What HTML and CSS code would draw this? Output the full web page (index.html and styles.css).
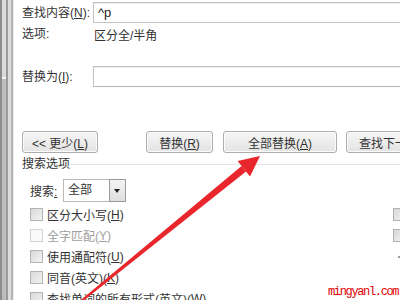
FILE: index.html
```html
<!DOCTYPE html>
<html lang="zh-CN">
<head>
  <meta charset="UTF-8" />
  <meta name="viewport" content="width=device-width, initial-scale=1.0"/>
  <title>查找和替换</title>
  <link rel="stylesheet" href="styles.css">
</head>
<body>

  <div class="screen">
    <!-- barra lateral (scroll) -->
    <div class="scrollbar"></div>

    <div class="dialog">
      <div class="row row-find">
        <span class="label">查找内容(<u>N</u>):</span>
        <div class="input">^p</div>
      </div>
      <div class="row row-opts">
        <span class="label">选项:</span>
        <span class="value">区分全/半角</span>
      </div>
      <div class="row row-replace">
        <span class="label">替换为(<u>I</u>):</span>
        <div class="input"></div>
      </div>

      <!-- botões -->
      <div class="buttons">
        <button class="btn btn-less">&lt;&lt; 更少(<u>L</u>)</button>
        <button class="btn btn-replace">替换(<u>R</u>)</button>
        <button class="btn btn-all">全部替换(<u>A</u>)</button>
        <button class="btn btn-next">查找下一处(<u>F</u>)</button>
      </div>

      <div class="section-title"><span>搜索选项</span><i class="rule"></i></div>

      <div class="search-row">
        <span class="search-label">搜索<u>:</u></span>
        <div class="select"><span>全部</span><i class="drop"></i></div>
      </div>

      <!-- opções de pesquisa -->
      <div class="options">
        <div class="col-left">
          <div class="check"><i class="box"></i>区分大小写(<u>H</u>)</div>
          <div class="check disabled"><i class="box"></i>全字匹配(<u>Y</u>)</div>
          <div class="check"><i class="box"></i>使用通配符(<u>U</u>)</div>
          <div class="check"><i class="box"></i>同音(英文)(<u>K</u>)</div>
          <div class="check"><i class="box"></i>查找单词的所有形式(英文)(<u>W</u>)</div>
        </div>
        <div class="col-right">
          <div class="check"><i class="box"></i></div>
          <div class="check"><i class="box"></i></div>
          <div class="check"><i class="dot"></i></div>
        </div>
      </div>
    </div>
  </div>

  <!-- seta vermelha -->
  <svg class="arrow" viewBox="0 0 400 300" width="400" height="300">
    <polygon points="241.6,166 246,171.4 74.6,307.8 73.4,306.2" fill="#e8262b"/>
    <polygon points="260,156 237.6,160.9 250,176.5" fill="#e8262b"/>
  </svg>

  <div class="watermark">mingyanl.com</div>
</body>
</html>
```

FILE: styles.css
```css
body {
  margin: 0;
  width: 400px;
  height: 300px;
  overflow: hidden;
  position: relative;
  background: #fff;
  font-family: "Liberation Sans", "Noto Sans CJK SC", sans-serif;
  font-size: 12px;
  color: #333;
}
u {
  text-decoration: underline;
  text-underline-offset: 1px;
}
.screen {
  display: flex;
  height: 300px;
}
.scrollbar {
  flex: 0 0 14px;
  background:
    linear-gradient(to bottom, #dadada 0 77px, #f4f4f4 77px 79px, #bdbdbd 79px) 2px 0 / 4px 100% no-repeat,
    linear-gradient(to right, #8c8c8c 0 2px, #cfcfcf 2px 6px, #9a9a9a 6px 8px, #dcdcdc 8px 11px, #b4b4b4 11px 13px, #ececec 13px 14px);
}
.dialog {
  flex: 1;
  min-width: 0;
  padding: 2px 0 0 8px;
}
.row {
  display: flex;
  align-items: center;
  white-space: nowrap;
}
.label {
  flex: 0 0 71px;
  line-height: 14px;
}
.row-find,
.row-replace {
  height: 21px;
}
.row-opts {
  margin-top: 4px;
  height: 14px;
}
.row-opts .value {
  margin-left: 1px;
}
.row-replace {
  margin-top: 25px;
}
.input {
  flex: 0 0 320px;
  height: 19px;
  border: 1px solid #c2c2c2;
  box-shadow: inset 0 1px 0 #f0f0f0;
  padding: 0 4px;
  font-size: 13px;
  line-height: 20px;
  color: #222;
}
.row-replace .input {
  border-bottom-color: #b5b5b5;
}

/* botões */
.buttons {
  display: flex;
  margin-top: 44px;
  height: 22px;
  white-space: nowrap;
}
.btn {
  height: 22px;
  margin: 0;
  padding: 0;
  border: 1px solid #adadad;
  border-radius: 3px;
  background: linear-gradient(#f6f6f6, #e3e3e3);
  box-shadow: inset 0 0 0 1px #fbfbfb;
  font-family: inherit;
  font-size: 12px;
  color: #333;
  flex: 0 0 auto;
}
.btn-less { width: 76px; }
.btn-replace { width: 67px; margin-left: 48px; }
.btn-all { width: 114px; margin-left: 10px; }
.btn-next { width: 110px; margin-left: 9px; text-align: left; padding-left: 12px; }

.section-title {
  display: flex;
  align-items: center;
  margin-top: 4px;
  height: 14px;
  line-height: 14px;
}
.section-title .rule {
  flex: 1;
  height: 1px;
  background: #e4e4e4;
  margin-left: 1px;
}

.search-row {
  display: flex;
  align-items: center;
  margin-top: 8px;
  padding-left: 8px;
  height: 23px;
}
.search-label {
  flex: 0 0 33px;
}
.select {
  display: flex;
  width: 61px;
  height: 21px;
  border: 1px solid #b8b8b8;
  background: #fff;
}
.select span {
  flex: 1;
  padding-left: 4px;
  line-height: 21px;
}
.select .drop {
  flex: 0 0 15px;
  border: 1px solid #9a9a9a;
  margin: -1px -1px -1px 0;
  background: linear-gradient(#f4f4f4, #dedede);
  position: relative;
}
.select .drop::after {
  content: "";
  position: absolute;
  left: 4px;
  top: 9px;
  border-left: 3.5px solid transparent;
  border-right: 3.5px solid transparent;
  border-top: 4px solid #222;
}

/* opções */
.options {
  display: flex;
  margin-top: 2px;
}
.col-left {
  flex: 0 0 363px;
  padding-left: 8px;
  white-space: nowrap;
}
.check {
  display: flex;
  align-items: center;
  height: 21px;
}
.box {
  width: 11px;
  height: 11px;
  border: 1px solid #b3b3b3;
  background: linear-gradient(135deg, #d8d8d8, #f3f3f3);
  margin-right: 4px;
  flex: 0 0 auto;
}
.disabled {
  color: #a0a0a0;
}
.disabled .box {
  border-color: #d2d2d2;
  background: #fafafa;
}
.col-right .box {
  width: 12px;
}
.col-right .dot {
  width: 2px;
  height: 2px;
  margin-left: 5px;
  background: #999;
}

.arrow {
  position: absolute;
  left: 0;
  top: 0;
  pointer-events: none;
}
.watermark {
  position: absolute;
  left: 328px;
  top: 285px;
  font-family: "Liberation Mono", monospace;
  font-size: 12px;
  letter-spacing: -1.35px;
  line-height: 14px;
  color: #e00000;
}
```
